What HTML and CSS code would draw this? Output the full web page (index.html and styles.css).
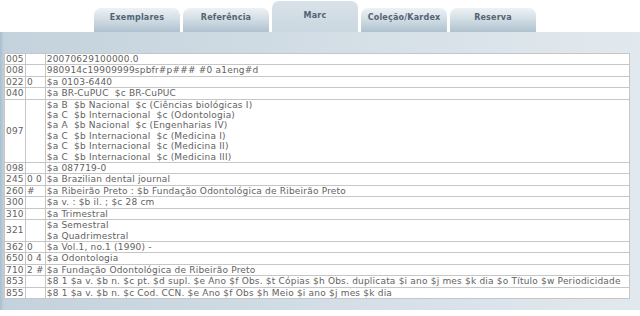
FILE: index.html
```html
<!DOCTYPE html>
<html lang="pt-BR">
<head>
  <meta charset="UTF-8">
  <title>Marc</title>
  <link rel="stylesheet" href="styles.css">
</head>
<body>
  <div class="tabs">
    <div class="tab">Exemplares</div>
    <div class="tab">Referência</div>
    <div class="tab active">Marc</div>
    <div class="tab">Coleção/Kardex</div>
    <div class="tab">Reserva</div>
  </div>

  <div class="panel">
    <table class="marc">
      <tr><td class="tag">005</td><td class="ind"></td><td class="dado">20070629100000.0</td></tr>
      <tr><td class="tag">008</td><td class="ind"></td><td class="dado">980914c19909999spbfr#p### #0 a1eng#d</td></tr>
      <tr><td class="tag">022</td><td class="ind">0</td><td class="dado">$a 0103-6440</td></tr>
      <tr><td class="tag">040</td><td class="ind"></td><td class="dado">$a BR-CuPUC  $c BR-CuPUC</td></tr>
      <tr><td class="tag">097</td><td class="ind"></td><td class="dado">$a B  $b Nacional  $c (Ciências biológicas I)
$a C  $b Internacional  $c (Odontologia)
$a A  $b Nacional  $c (Engenharias IV)
$a C  $b Internacional  $c (Medicina I)
$a C  $b Internacional  $c (Medicina II)
$a C  $b Internacional  $c (Medicina III)</td></tr>
      <tr><td class="tag">098</td><td class="ind"></td><td class="dado">$a 087719-0</td></tr>
      <tr><td class="tag">245</td><td class="ind">0 0</td><td class="dado">$a Brazilian dental journal</td></tr>
      <tr><td class="tag">260</td><td class="ind">#</td><td class="dado">$a Ribeirão Preto : $b Fundação Odontológica de Ribeirão Preto</td></tr>
      <tr><td class="tag">300</td><td class="ind"></td><td class="dado">$a v. : $b il. ; $c 28 cm</td></tr>
      <tr><td class="tag">310</td><td class="ind"></td><td class="dado">$a Trimestral</td></tr>
      <tr><td class="tag">321</td><td class="ind"></td><td class="dado">$a Semestral
$a Quadrimestral</td></tr>
      <tr><td class="tag">362</td><td class="ind">0</td><td class="dado">$a Vol.1, no.1 (1990) -</td></tr>
      <tr><td class="tag">650</td><td class="ind">0 4</td><td class="dado">$a Odontologia</td></tr>
      <tr><td class="tag">710</td><td class="ind">2 #</td><td class="dado">$a Fundação Odontológica de Ribeirão Preto</td></tr>
      <tr><td class="tag">853</td><td class="ind"></td><td class="dado">$8 1 $a v. $b n. $c pt. $d supl. $e Ano $f Obs. $t Cópias $h Obs. duplicata $i ano $j mes $k dia $o Título $w Periodicidade</td></tr>
      <tr><td class="tag">855</td><td class="ind"></td><td class="dado">$8 1 $a v. $b n. $c Cod. CCN. $e Ano $f Obs $h Meio $i ano $j mes $k dia</td></tr>
    </table>
  </div>
</body>
</html>
```

FILE: styles.css
```css
* {
  box-sizing: border-box;
}

body {
  margin: 0;
  background: #fff;
  font-family: "DejaVu Sans", Verdana, sans-serif;
}

.tabs {
  display: flex;
  align-items: flex-end;
  gap: 3px;
  height: 32px;
  padding-left: 94px;
}

.tab {
  width: 86px;
  height: 24px;
  padding-top: 5px;
  border-radius: 7px 7px 0 0;
  background: linear-gradient(#eef2f5, #d3dee5 45%, #afc2cf);
  color: #536372;
  font-size: 8px;
  font-weight: bold;
  letter-spacing: 0.2px;
  text-align: center;
}

.tab.active {
  height: 31px;
  padding-top: 10px;
  background: linear-gradient(#d9e2e8, #cad7e0);
}

.panel {
  height: 278px;
  padding: 21px 10px 0 4px;
  background: linear-gradient(to right, #a9bfcd 0, #c3d2dc 4px, #cfdbe3 40%, #e2e9ee 100%);
}

.marc {
  width: 100%;
  border-collapse: collapse;
  background: #fff;
  border: 1px solid #bdbdbd;
  font-size: 9px;
  letter-spacing: 0.2px;
  line-height: 10.4px;
  color: #626262;
}

.marc td {
  border: 1px solid #c6c6c6;
  padding: 0 1px;
  vertical-align: middle;
  white-space: pre;
}

.marc .tag {
  width: 21px;
}

.marc .ind {
  width: 15px;
}
```
